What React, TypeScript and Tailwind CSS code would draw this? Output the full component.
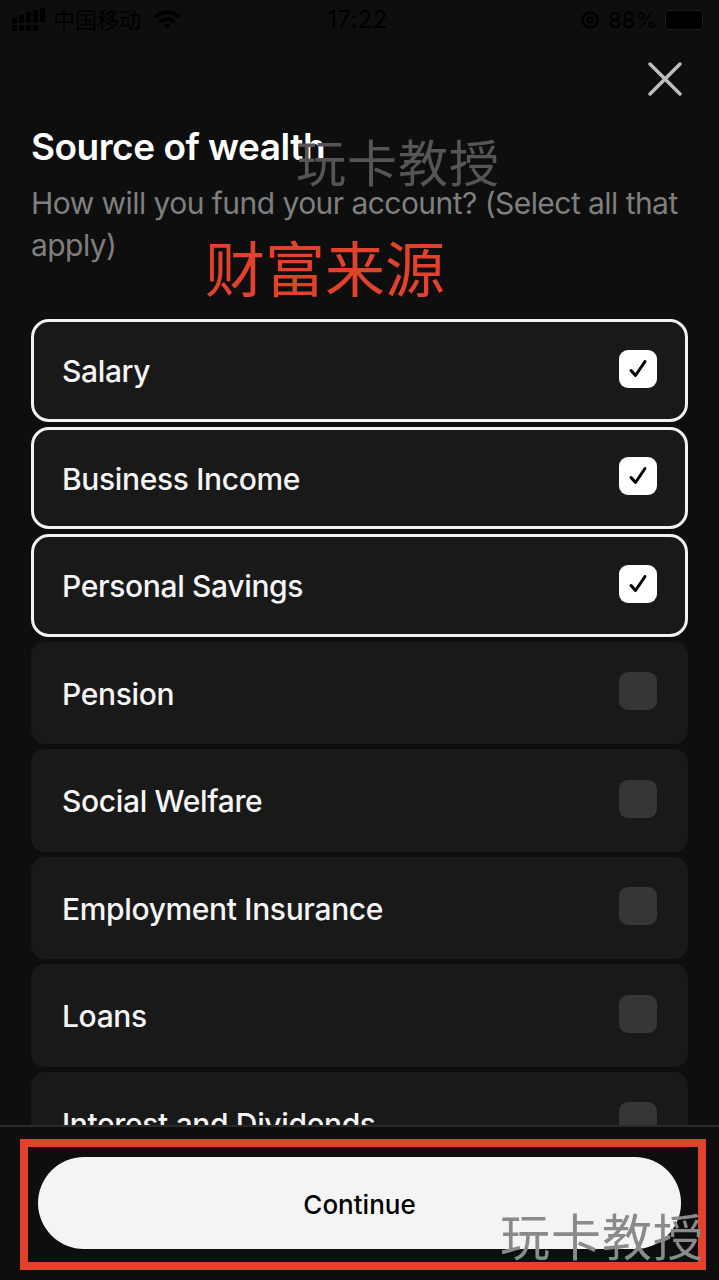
import React from "react";

const font = "font-['Inter','Noto_Sans_CJK_SC',sans-serif]";

const options = [
  { label: "Salary", checked: true },
  { label: "Business Income", checked: true },
  { label: "Personal Savings", checked: true },
  { label: "Pension", checked: false },
  { label: "Social Welfare", checked: false },
  { label: "Employment Insurance", checked: false },
  { label: "Loans", checked: false },
  { label: "Interest and Dividends", checked: false },
];

const StatusBar = () => (
  <div className="flex h-[40px] shrink-0 items-center pl-[12px] pr-[16px] text-[22px] text-[#000000]">
    <div className="flex flex-1 items-center gap-[7px]">
      <svg width="34" height="24" viewBox="0 0 34 24" fill="#000000">
        <rect x="0" y="10" width="5" height="5" />
        <rect x="0" y="17" width="5" height="6" />
        <rect x="7" y="7" width="5" height="8" />
        <rect x="7" y="17" width="5" height="6" />
        <rect x="14" y="4" width="5" height="11" />
        <rect x="14" y="17" width="5" height="6" />
        <rect x="21" y="2" width="5" height="13" />
        <rect x="21" y="17" width="5" height="6" />
        <rect x="28" y="0" width="5" height="14" />
      </svg>
      <span>中国移动</span>
      <svg className="ml-[5px]" width="28" height="22" viewBox="0 0 30 22" fill="none" stroke="#000000" strokeWidth="4">
        <path d="M2 8a19 19 0 0 1 26 0" />
        <path d="M7 13a12 12 0 0 1 16 0" />
        <path d="M15 21l-4-4a6 6 0 0 1 8 0z" fill="#000000" stroke="none" />
      </svg>
    </div>
    <span className="text-[24px] tracking-[0.4px]">17:22</span>
    <div className="flex flex-1 items-center justify-end gap-[8px]">
      <svg width="20" height="22" viewBox="0 0 20 22" fill="none" stroke="#000000" strokeWidth="2.5">
        <circle cx="10" cy="11" r="7.5" />
        <circle cx="10" cy="11" r="2.5" />
      </svg>
      <span>88%</span>
      <div className="h-[20px] w-[38px] rounded-[4px] border border-[#1c1c1c] bg-[#000000]" />
    </div>
  </div>
);

const OptionRow = ({ label, checked }: { label: string; checked: boolean }) => (
  <div
    className={
      checked
        ? "flex h-[102.5px] shrink-0 items-center justify-between rounded-[18px] border-[3px] border-[#f2f2f2] bg-[#191919] pl-[28px] pr-[28px]"
        : "flex h-[102.5px] shrink-0 items-center justify-between rounded-[14px] bg-[#191919] pl-[31px] pr-[31px]"
    }
  >
    <span className="pt-[2px] text-[30px] font-medium leading-[40px] tracking-[-0.35px] text-[#f5f5f5]">{label}</span>
    {checked ? (
      <div className="mb-[3px] flex size-[38px] items-center justify-center rounded-[9px] bg-white">
        <svg width="24" height="24" viewBox="0 0 24 24" fill="none" stroke="#000000" strokeWidth="3" strokeLinecap="round" strokeLinejoin="round">
          <path d="M5 13.5l4.5 5L19 4.5" />
        </svg>
      </div>
    ) : (
      <div className="mb-[3px] size-[38px] rounded-[9px] bg-[#363636]" />
    )}
  </div>
);

export default function App() {
  return (
    <div className={`relative flex h-[1280px] w-[719px] flex-col overflow-hidden bg-[#0e0e0e] ${font}`}>
      <StatusBar />

      <div className="flex shrink-0 justify-end pr-[36px] pt-[21px]">
        <svg width="36" height="36" viewBox="0 0 36 36" fill="none" stroke="#bdbdbd" strokeWidth="3.5" strokeLinecap="round">
          <path d="M3 3l30 30M33 3L3 33" />
        </svg>
      </div>

      <div className="shrink-0 px-[31px] pt-[28px]">
        <h1 className="text-[37px] font-semibold leading-[44px] tracking-[-0.5px] text-white">Source of wealth</h1>
        <p className="mt-[13px] text-[30px] leading-[42px] tracking-[-0.55px] text-[#7f7f7f]">
          How will you fund your account? (Select all that apply)
        </p>
      </div>

      <div className="mt-[53px] flex min-h-0 flex-1 flex-col gap-[5px] overflow-hidden px-[31px]">
        {options.map((o) => (
          <OptionRow key={o.label} label={o.label} checked={o.checked} />
        ))}
      </div>

      <div className="h-[155px] shrink-0 border-t-2 border-[#2a2a2a] bg-[#0e0e0e] px-[38px] pt-[30px]">
        <button className="flex h-[92px] w-full items-center justify-center rounded-[46px] bg-[#f4f4f4] pt-[3px] text-[26px] font-medium text-black">
          Continue
        </button>
      </div>

      {/* annotations added on top of the screenshot */}
      <span className="absolute left-[296px] top-[134px] text-[50px] leading-[60px] tracking-[1px] text-[#555555]">玩卡教授</span>
      <span className="absolute left-[205px] top-[236px] text-[60px] leading-[68px] text-[#e2412b]">财富来源</span>
      <div className="absolute left-[20px] top-[1139px] h-[131px] w-[686px] border-[8px] border-[#e2412b]" />
      <span className="absolute left-[500px] top-[1208px] text-[50px] leading-[60px] tracking-[1px] text-[#8a8a8a]">玩卡教授</span>
    </div>
  );
}
